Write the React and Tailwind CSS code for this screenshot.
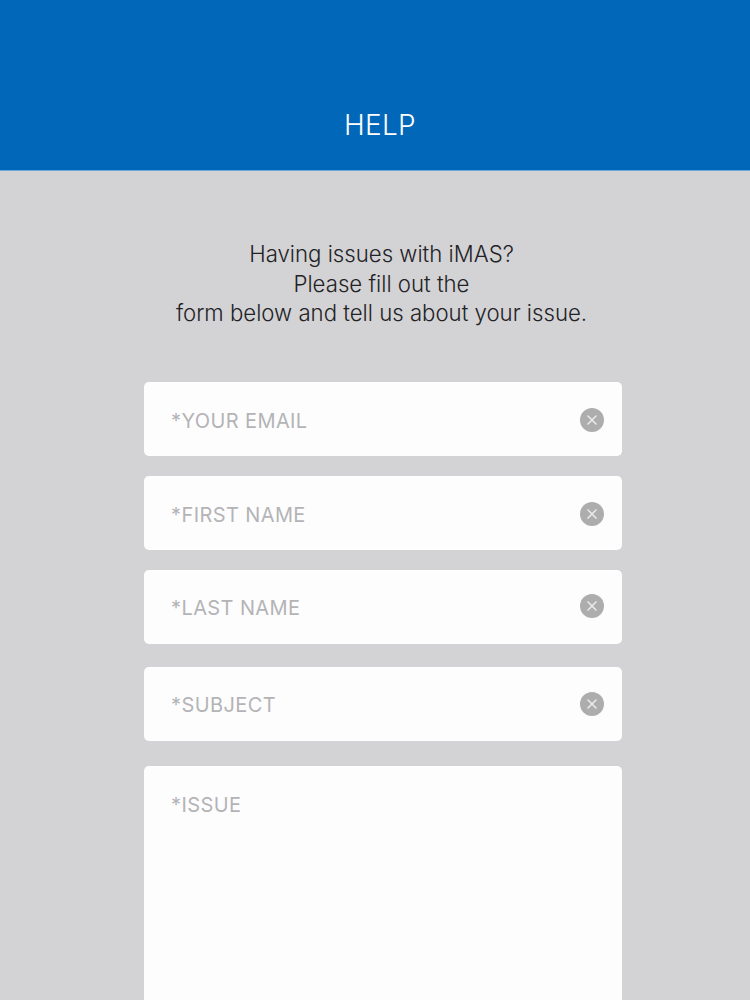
function Clear({ offset }) {
  return (
    <svg viewBox="0 0 24 24" className={`w-6 h-6 shrink-0 ${offset}`}>
      <circle cx="12" cy="12" r="12" fill="#adadad" />
      <path d="M8 8l8 8M16 8l-8 8" stroke="#ececec" strokeWidth="1.5" strokeLinecap="round" />
    </svg>
  );
}

function Field({ label, className, labelOffset, iconOffset }) {
  return (
    <div className={`h-[74px] bg-[#fdfdfe] rounded-[5px] flex items-center justify-between pl-[27px] pr-[18px] ${className}`}>
      <span className={`text-[20px] tracking-[0.4px] text-[#b4b4b6] ${labelOffset}`}>{label}</span>
      <Clear offset={iconOffset} />
    </div>
  );
}

export default function App() {
  return (
    <div className="w-[750px] h-[1000px] overflow-hidden bg-[#d3d2d4] font-['Inter',sans-serif]">
      <header className="h-[171px] bg-[#0067b9] border-b border-[#6fa6d8] flex items-end justify-center pb-[28px] pl-[10px]">
        <h1 className="text-[28px] leading-[34px] font-[350] text-white tracking-[0.3px]">HELP</h1>
      </header>
      <p className="mt-[68px] ml-[13px] text-center text-[22.2px] leading-[29.5px] font-[350] text-[#222226]">
        Having issues with iMAS?<br />Please fill out the<br />form below and tell us about your issue.
      </p>
      <form className="mt-[54px] ml-[144px] w-[478px] flex flex-col">
        <Field label="*YOUR EMAIL" labelOffset="pt-[5px]" iconOffset="mt-[2px]" />
        <Field label="*FIRST NAME" className="mt-[20px]" labelOffset="pt-[5px]" iconOffset="mt-[2px]" />
        <Field label="*LAST NAME" className="mt-[20px]" labelOffset="pt-[2px]" iconOffset="mb-[1px]" />
        <Field label="*SUBJECT" className="mt-[23px]" labelOffset="pt-[2px]" iconOffset="mt-[1px]" />
        <div className="mt-[25px] h-[300px] bg-[#fdfdfe] rounded-[5px] pl-[27px] pt-[25px]">
          <span className="text-[20px] leading-[28px] tracking-[0.4px] text-[#b4b4b6]">*ISSUE</span>
        </div>
      </form>
    </div>
  );
}
